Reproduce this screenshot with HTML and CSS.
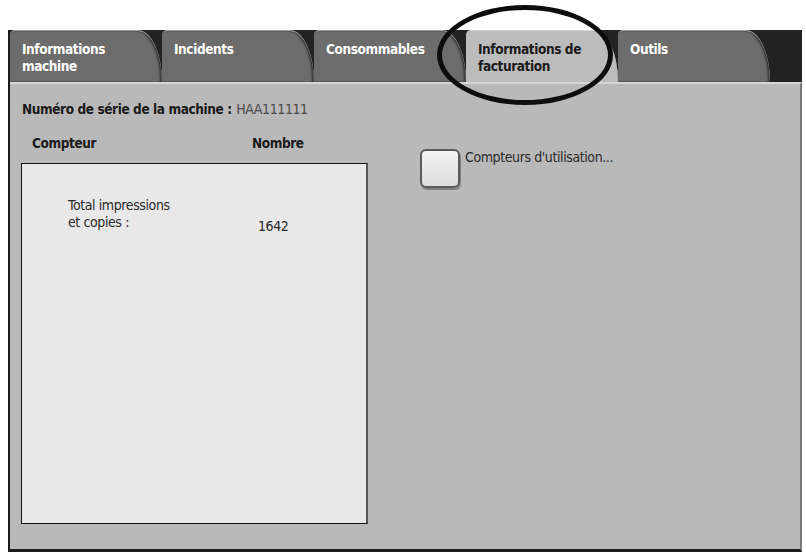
FILE: index.html
```html
<!DOCTYPE html>
<html lang="fr">
<head>
    <meta charset="UTF-8">
    <title>Informations de facturation</title>
    <link rel="stylesheet" href="styles.css">
</head>
<body>
    <div class="screen">
        <div class="tabs">
            <div class="tab">Informations<br>machine</div>
            <div class="tab">Incidents</div>
            <div class="tab">Consommables</div>
            <div class="tab tab-active">Informations de<br>facturation</div>
            <div class="tab">Outils</div>
        </div>

        <div class="panel">
            <div class="serial">
                <span class="label">Numéro de série de la machine :</span>
                <span class="value">HAA111111</span>
            </div>

            <div class="columns">
                <div class="counters">
                    <div class="counter-head">
                        <span>Compteur</span>
                        <span>Nombre</span>
                    </div>
                    <div class="counter-list">
                        <div class="counter-row">
                            <span class="counter-name">Total impressions<br>et copies :</span>
                            <span class="counter-value">1642</span>
                        </div>
                    </div>
                </div>

                <div class="actions">
                    <div class="action">
                        <div class="action-btn"></div>
                        <span>Compteurs d'utilisation...</span>
                    </div>
                </div>
            </div>
        </div>
    </div>

    <!-- annotation drawn over the tab -->
    <div class="highlight"></div>
</body>
</html>
```

FILE: styles.css
```css
body {
    margin: 0;
    padding: 0;
    background-color: #ffffff;
    font-family: "DejaVu Sans Condensed", "Liberation Sans", sans-serif;
    letter-spacing: -0.4px;
    position: relative;
}

.screen {
    margin: 30px 0 0 8px;
    width: 794px;
    background-color: #222222;
    border-left: 2px solid #1c1c1c;
    box-sizing: border-box;
}

.tabs {
    display: flex;
    height: 52px;
}

.tab {
    width: 152px;
    height: 52px;
    box-sizing: border-box;
    padding: 10px 0 0 12px;
    background-color: #6c6c6c;
    border-top: 1px solid #a0a0a0;
    border-top-left-radius: 5px;
    border-top-right-radius: 24px 52px;
    color: #ffffff;
    font-weight: bold;
    font-size: 13.5px;
    line-height: 17px;
    box-shadow: inset -2px 0 2px #3a3a3a;
}

.tab-active {
    background-color: #bcbcbc;
    color: #1a1a1a;
    border-top-color: #d0d0d0;
    box-shadow: none;
}

.panel {
    background-color: #b9b9b9;
    border-top: 2px solid #d6d6d6;
    border-right: 2px solid #7a7a7a;
    border-bottom: 3px solid #1c1c1c;
    height: 470px;
    box-sizing: border-box;
    padding: 16px 0 0 12px;
    color: #1a1a1a;
}

.serial {
    font-size: 13.5px;
    line-height: 18px;
}

.serial .label {
    font-weight: bold;
}

.serial .value {
    color: #4a4a4a;
    font-size: 14px;
    margin-left: 1px;
}

.columns {
    display: flex;
    margin-top: 16px;
}

.counters {
    width: 347px;
    margin-left: -1px;
}

.counter-head {
    display: flex;
    font-weight: bold;
    font-size: 13.5px;
    line-height: 18px;
    padding-left: 11px;
}

.counter-head span:first-child {
    width: 220px;
}

.counter-list {
    margin-top: 11px;
    height: 361px;
    box-sizing: border-box;
    background-color: #e8e8e8;
    border: 1px solid #111111;
    border-right: 2px solid #555555;
    padding: 33px 0 0 46px;
}

.counter-row {
    display: flex;
    align-items: flex-end;
    font-size: 14px;
    line-height: 17px;
    color: #2a2a2a;
}

.counter-name {
    width: 190px;
}

.counter-value {
    margin-bottom: -4px;
}

.actions {
    margin-left: 52px;
    margin-top: 15px;
}

.action {
    display: flex;
    align-items: flex-start;
    gap: 5px;
    font-size: 14px;
    color: #2a2a2a;
}

.action span {
    margin-top: 0;
}

.action-btn {
    width: 36px;
    height: 35px;
    border: 2px solid #5a5a5a;
    border-radius: 6px;
    background: linear-gradient(#f4f4f4, #dcdcdc);
    box-shadow: 1px 2px 0 #808080;
}

.highlight {
    position: absolute;
    left: 437px;
    top: 5px;
    width: 176px;
    height: 100px;
    box-sizing: border-box;
    border: 5px solid #0d0d0d;
    border-radius: 50%;
}
```
